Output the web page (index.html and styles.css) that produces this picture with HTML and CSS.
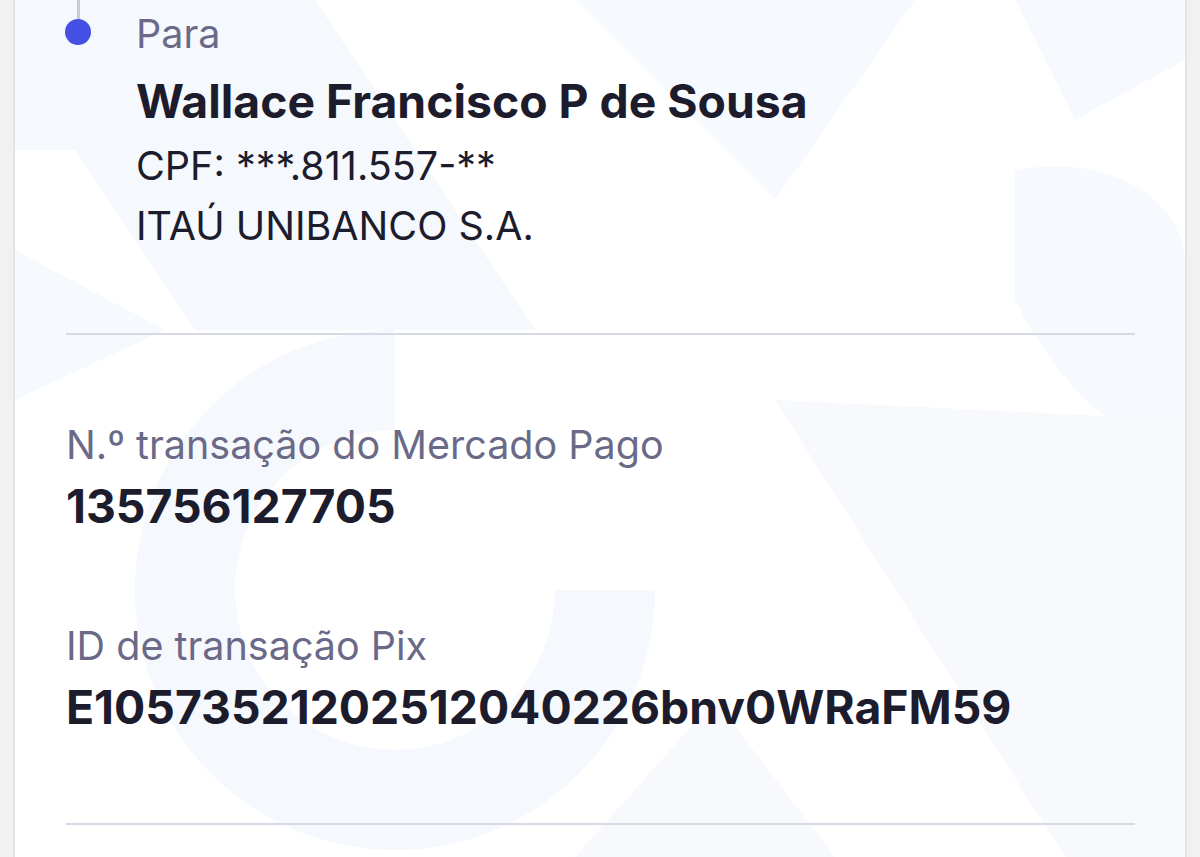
FILE: index.html
```html
<!DOCTYPE html>
<html lang="pt-BR">
<head>
<meta charset="utf-8">
<title>Comprovante Pix</title>
<link rel="stylesheet" href="styles.css">
</head>
<body>
<div class="frame">
  <main class="card">
    <svg class="watermark" viewBox="0 0 1170 857" preserveAspectRatio="none" aria-hidden="true">
      <polygon points="0,0 300,0 520,330 180,330 60,150 0,150" fill="#f5f8fc"/>
      <polygon points="560,0 900,0 760,200" fill="#f6f9fd"/>
      <polygon points="1000,0 1170,0 1170,60 1060,120" fill="#f6f9fd"/>
      <path d="M1000,170 C1120,150 1170,220 1170,260 L1170,460 C1100,440 1040,380 1000,300 Z" fill="#f6f9fd"/>
      <polygon points="0,250 150,330 0,400" fill="#f6f9fd"/>
      <path d="M380,330 A260,260 0 1 0 640,590 L540,590 A160,160 0 1 1 380,430 Z" fill="#f5f8fc"/>
      <polygon points="760,400 1170,420 1170,857 1050,857" fill="#f7f9fd"/>
      <polygon points="560,857 700,700 820,857" fill="#f7f9fd"/>
    </svg>
    <section class="party">
      <div class="timeline">
        <span class="rail"></span>
        <span class="dot"></span>
      </div>
      <div class="party-info">
        <p class="party-role">Para</p>
        <h2 class="party-name">Wallace Francisco P de Sousa</h2>
        <p class="party-line party-cpf">CPF: ***.811.557-**</p>
        <p class="party-line">ITAÚ UNIBANCO S.A.</p>
      </div>
    </section>
    <hr class="divider divider-top">
    <section class="details">
      <div class="field">
        <p class="field-label">N.º transação do Mercado Pago</p>
        <p class="field-value">135756127705</p>
      </div>
      <div class="field">
        <p class="field-label">ID de transação Pix</p>
        <p class="field-value">E10573521202512040226bnv0WRaFM59</p>
      </div>
    </section>
    <hr class="divider divider-bottom">
  </main>
</div>
</body>
</html>
```
FILE: styles.css
```css
* { box-sizing: border-box; }
html, body { margin: 0; padding: 0; }
body {
  width: 1200px;
  height: 857px;
  overflow: hidden;
  background: #f1f1f2;
  font-family: "Inter", "Noto Sans", sans-serif;
  color: #1c1c2d;
}
.frame {
  height: 857px;
  padding: 0 13px 0 13px;
  display: flex;
}
.card {
  position: relative;
  flex: 1;
  background: #ffffff;
  border-left: 2px solid #e4e4e8;
  border-right: 2px solid #e4e4e8;
  padding: 0 50px 0 51px;
  overflow: hidden;
}
.watermark {
  position: absolute;
  left: 0;
  top: 0;
  width: 100%;
  height: 100%;
  z-index: 0;
}
.party, .divider, .details { position: relative; z-index: 1; }
p, h2 { margin: 0; }

.party {
  display: flex;
}
.timeline {
  position: relative;
  width: 70px;
  flex: none;
}
.rail {
  position: absolute;
  left: 11px;
  top: 0;
  width: 3px;
  height: 20px;
  background: #c9cbd8;
}
.dot {
  position: absolute;
  left: -1px;
  top: 19px;
  width: 26px;
  height: 26px;
  border-radius: 50%;
  background: #4450e4;
}
.party-info {
  padding-top: 12px;
  padding-bottom: 77px;
}
.party-role {
  font-size: 39.5px;
  line-height: 44px;
  color: #6a6a88;
}
.party-name {
  font-size: 46.3px;
  line-height: 50px;
  font-weight: 700;
  color: #1c1c2d;
  margin-top: 20px;
}
.party-line {
  font-size: 39.5px;
  line-height: 60px;
  color: #1c1c2d;
}
.party-cpf { margin-top: 10px; }

.divider {
  border: 0;
  height: 2px;
  margin: 0;
  background: #d8d9e6;
}
.details {
  padding-top: 88px;
  display: flex;
  flex-direction: column;
  gap: 93px;
}
.field-label {
  font-size: 39.5px;
  line-height: 44px;
  color: #6a6a88;
}
.field-value {
  font-size: 46.3px;
  line-height: 50px;
  font-weight: 700;
  color: #1c1c2d;
  margin-top: 14px;
}
.divider-bottom { margin-top: 91px; }
```
